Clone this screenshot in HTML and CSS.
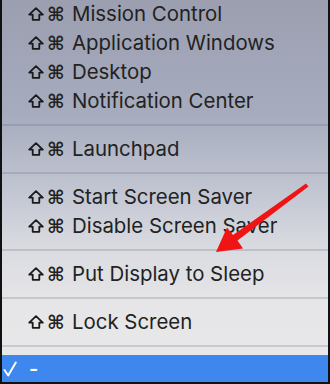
FILE: index.html
```html
<!DOCTYPE html>
<html lang="en">
<head>
  <meta charset="UTF-8" />
  <title>Shortcuts</title>
  <link rel="stylesheet" href="styles.css">
</head>
<body>
  <svg width="0" height="0" class="defs">
    <symbol id="shift" viewBox="0 0 16 14">
      <path d="M8 1.2 L14.8 7.6 L11.3 7.6 L11.3 12.8 L4.7 12.8 L4.7 7.6 L1.2 7.6 Z" fill="none" stroke="currentColor" stroke-width="1.8" stroke-linejoin="round"/>
    </symbol>
  </svg>

  <div class="menu">
    <div class="group first">
      <div class="item"><svg class="shift"><use href="#shift"/></svg><span class="cmd">⌘</span>Mission Control</div>
      <div class="item"><svg class="shift"><use href="#shift"/></svg><span class="cmd">⌘</span>Application Windows</div>
      <div class="item"><svg class="shift"><use href="#shift"/></svg><span class="cmd">⌘</span>Desktop</div>
      <div class="item"><svg class="shift"><use href="#shift"/></svg><span class="cmd">⌘</span>Notification Center</div>
    </div>
    <div class="sep"></div>
    <div class="group">
      <div class="item"><svg class="shift"><use href="#shift"/></svg><span class="cmd">⌘</span>Launchpad</div>
    </div>
    <div class="sep"></div>
    <div class="group">
      <div class="item"><svg class="shift"><use href="#shift"/></svg><span class="cmd">⌘</span>Start Screen Saver</div>
      <div class="item"><svg class="shift"><use href="#shift"/></svg><span class="cmd">⌘</span>Disable Screen Saver</div>
    </div>
    <div class="sep"></div>
    <div class="group">
      <div class="item"><svg class="shift"><use href="#shift"/></svg><span class="cmd">⌘</span>Put Display to Sleep</div>
    </div>
    <div class="sep"></div>
    <div class="group">
      <div class="item"><svg class="shift"><use href="#shift"/></svg><span class="cmd">⌘</span>Lock Screen</div>
    </div>
    <div class="sep"></div>
    <div class="selected">
      <svg class="check" width="14" height="16" viewBox="0 0 14 16">
        <path d="M1.5 9 L5.2 14.5 L12.8 1.5" fill="none" stroke="#fff" stroke-width="2" stroke-linecap="round" stroke-linejoin="round"/>
      </svg>
      <span class="dash">-</span>
    </div>

    <svg class="arrow" width="330" height="384" viewBox="0 0 330 384">
      <polygon points="306,183.5 308.5,186.5 237.5,240.5 243,248.5 216,252 227,227.5 233,235" fill="#f01414"/>
    </svg>
  </div>
</body>
</html>
```

FILE: styles.css
```css
* {
  box-sizing: border-box;
  margin: 0;
  padding: 0;
}

body {
  width: 330px;
  height: 384px;
  overflow: hidden;
  font-family: 'Inter', 'Liberation Sans', sans-serif;
}

.defs {
  position: absolute;
}

.menu {
  position: relative;
  width: 330px;
  height: 384px;
  border: 2px solid #111;
  border-top: none;
  background: linear-gradient(to bottom, #9b9fb0 0%, #a6abbe 30%, #c2c6d2 50%, #dadbe1 65%, #e6e6e8 80%, #e9e9ea 100%);
  display: flex;
  flex-direction: column;
}

.group {
  display: flex;
  flex-direction: column;
}

.group.first {
  margin-top: -1px;
}

.item {
  height: 29px;
  display: flex;
  align-items: center;
  padding-left: 26px;
  font-size: 20.4px;
  color: #222;
  white-space: nowrap;
}

.shift {
  width: 16px;
  height: 14px;
  margin-right: 3px;
  color: #1a1a1a;
}

.cmd {
  font-family: 'DejaVu Sans', sans-serif;
  font-weight: bold;
  font-size: 19px;
  width: 25px;
}

.sep {
  height: 2px;
  margin: 9px 0 8px;
  background: rgba(90, 95, 115, 0.22);
}

.selected {
  height: 27px;
  background: #3d87ee;
  display: flex;
  align-items: center;
  padding-left: 1px;
  color: #fff;
}

.check {
  margin-right: 12px;
}

.dash {
  font-size: 20px;
  font-weight: 600;
}

.arrow {
  position: absolute;
  top: 0;
  left: -2px;
  pointer-events: none;
}
```
